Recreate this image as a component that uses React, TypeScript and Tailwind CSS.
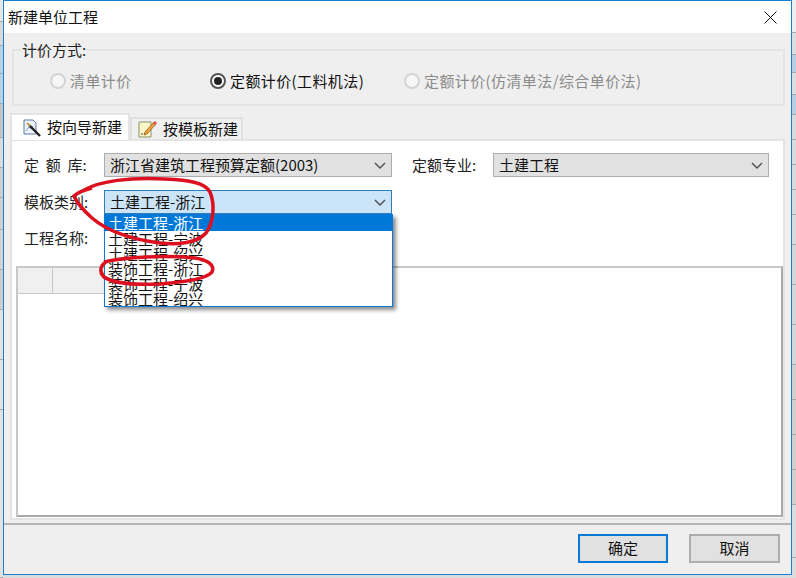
const cjk = "font-['Noto_Sans_CJK_SC','Noto_Sans',sans-serif]";

const leftRows = [
  { h: 22, bg: 'bg-[#e6e6e6]' },
  { h: 24, bg: 'bg-[#d9d9d9]' },
  { h: 28, bg: 'bg-[#b9cfe2]' },
  { h: 30, bg: 'bg-[#b9cfe2]' },
  { h: 34, bg: 'bg-[#c4c4c4]' },
  { h: 30, bg: 'bg-[#dcdcdc]' },
  { h: 30, bg: 'bg-[#cfcfcf]' },
  { h: 32, bg: 'bg-[#cfcfcf]' },
  { h: 40, bg: 'bg-[#d4d4d4]' },
  { h: 40, bg: 'bg-[#cdcdcd]' },
  { h: 50, bg: 'bg-[#e2e2e2]' },
  { h: 50, bg: 'bg-[#e2e2e2]' },
  { h: 168, bg: 'bg-[#e2e2e2]' },
];

const rightRows = [
  { h: 33, bg: 'bg-[#eeeeee]' },
  { h: 22, bg: 'bg-[#dddddd]' },
  { h: 18, bg: 'bg-[#b8cde0]' },
  { h: 22, bg: 'bg-[#dddddd]' },
  { h: 20, bg: 'bg-[#b8cde0]' },
  { h: 25, bg: 'bg-[#dadada]' },
  { h: 25, bg: 'bg-[#dadada]' },
  { h: 25, bg: 'bg-[#dadada]' },
  { h: 25, bg: 'bg-[#dadada]' },
  { h: 30, bg: 'bg-[#dadada]' },
  { h: 40, bg: 'bg-[#d6d6d6]' },
  { h: 40, bg: 'bg-[#d6d6d6]' },
  { h: 40, bg: 'bg-[#d6d6d6]' },
  { h: 35, bg: 'bg-[#d2cfcc]' },
  { h: 35, bg: 'bg-[#d2cfcc]' },
  { h: 35, bg: 'bg-[#d2cfcc]' },
  { h: 35, bg: 'bg-[#d2cfcc]' },
  { h: 53, bg: 'bg-[#dcdcdc]' },
];

const options = ['土建工程-浙江', '土建工程-宁波', '土建工程-绍兴', '装饰工程-浙江', '装饰工程-宁波', '装饰工程-绍兴'];

function Strip({ rows, width }: { rows: { h: number; bg: string }[]; width: string }) {
  return (
    <div className={`${width} shrink-0 flex flex-col`}>
      {rows.map((r, i) => (
        <div key={i} className={`${r.bg} border-b border-[#a9a9a9] shrink-0`} style={{ height: r.h }} />
      ))}
    </div>
  );
}

function Chevron() {
  return (
    <svg width="12" height="7" viewBox="0 0 12 7" className="shrink-0">
      <polyline points="1,1 6,6 11,1" fill="none" stroke="#4d4d4d" strokeWidth="1.4" />
    </svg>
  );
}

function Radio({ label, checked, disabled }: { label: string; checked?: boolean; disabled?: boolean }) {
  return (
    <div className={`flex items-center gap-[4px] text-[15px] leading-[20px] tracking-[0.4px] ${disabled ? 'text-[#8b8b8b]' : 'text-[#111]'}`}>
      <span className={`w-[16px] h-[16px] rounded-full border-2 flex items-center justify-center ${disabled ? 'border-[#d4d4d4] bg-[#f6f6f6]' : 'border-[#555] bg-white'}`}>
        {checked && <span className="w-[8px] h-[8px] rounded-full bg-[#222]" />}
      </span>
      <span>{label}</span>
    </div>
  );
}

function Combo({ value, width, active }: { value: string; width: string; active?: boolean }) {
  return (
    <div className={`${width} h-[24px] flex items-center justify-between pl-[5px] pr-[5px] border-[1.5px] text-[15px] text-[#111] ${active ? 'bg-[#cce4f7] border-[#2f7fbd]' : 'bg-[#e1e1e1] border-[#adadad]'}`}>
      <span className="whitespace-nowrap">{value}</span>
      <Chevron />
    </div>
  );
}

function WizardIcon() {
  return (
    <svg width="20" height="20" viewBox="0 0 20 20">
      <path d="M2 2h9l3 3v11H2z" fill="#eef3fa" stroke="#5b78a8" strokeWidth="1" />
      <path d="M4 13l3-4 2 2 2-3" fill="none" stroke="#7d9ccc" strokeWidth="1" />
      <path d="M7 7l11 11" stroke="#222" strokeWidth="2.4" />
      <path d="M5 5l3 3" stroke="#c9a04a" strokeWidth="2" />
    </svg>
  );
}

function TemplateIcon() {
  return (
    <svg width="20" height="20" viewBox="0 0 20 20">
      <path d="M2 3h12v15H2z" fill="#fbf6c8" stroke="#8a8f6a" strokeWidth="1" />
      <path d="M4 15h2M7 15h2" stroke="#555" strokeWidth="1" />
      <path d="M8 13l9-10 2 2-9 10-3 1z" fill="#e8a33c" stroke="#9a5b1e" strokeWidth="0.8" />
      <path d="M16 4l2-2 2 2-2 2z" fill="#e2574c" />
    </svg>
  );
}

export default function App() {
  return (
    <div className={`${cjk} relative w-[796px] h-[578px] overflow-hidden flex bg-[#dcdcdc]`}>
      <Strip rows={leftRows} width="w-[3px]" />

      <div className="w-[789px] shrink-0 h-[575px] flex flex-col border border-[#1a7fd0] bg-[#efefef]">
        {/* title bar */}
        <div className="h-[32px] shrink-0 bg-white flex items-center justify-between pl-[4px] pr-[14px]">
          <span className="text-[15px] text-[#111]">新建单位工程</span>
          <svg width="13" height="13" viewBox="0 0 13 13">
            <path d="M0.5 0.5l12 12M12.5 0.5l-12 12" stroke="#111" strokeWidth="1" />
          </svg>
        </div>

        <div className="flex-1 flex flex-col min-h-0">
          <fieldset className="ml-[8px] mr-[6px] mt-[8px] h-[65px] shrink-0 border-2 border-[#e4e4e4] pl-[7px]">
            <legend className="px-[1px] text-[15px] leading-[18px] text-[#222]">计价方式:</legend>
            <div className="flex items-center pl-[29px] pt-[12px]">
              <div className="w-[160px]"><Radio label="清单计价" disabled /></div>
              <div className="w-[194px]"><Radio label="定额计价(工料机法)" checked /></div>
              <Radio label="定额计价(仿清单法/综合单价法)" disabled />
            </div>
          </fieldset>

          {/* tabs */}
          <div className="ml-[6px] mt-[6px] h-[27px] shrink-0 flex items-end">
            <div className="w-[120px] h-[27px] -mb-[1px] bg-white border-2 border-b-0 border-[#e4e4e4] flex items-center gap-[5px] pl-[10px] text-[15px] text-[#111] relative z-10">
              <WizardIcon />
              <span>按向导新建</span>
            </div>
            <div className="w-[113px] h-[22px] bg-[#f0f0f0] border-2 border-b-0 border-[#e0e0e0] flex items-center gap-[6px] pl-[5px] text-[15px] text-[#111]">
              <TemplateIcon />
              <span>按模板新建</span>
            </div>
          </div>

          {/* tab page */}
          <div className="ml-[6px] mr-[6px] h-[381px] shrink-0 bg-white border-2 border-[#e4e4e4] flex flex-col pt-[12px]">
            <div className="flex items-center pl-[12px]">
              <span className="w-[80px] text-[15px] text-[#222] whitespace-pre">定  额  库:</span>
              <Combo value="浙江省建筑工程预算定额(2003)" width="w-[288px]" />
              <span className="ml-[20px] w-[81px] text-[15px] text-[#222]">定额专业:</span>
              <Combo value="土建工程" width="w-[276px]" />
            </div>
            <div className="flex items-center pl-[12px] mt-[13px]">
              <span className="w-[80px] text-[15px] text-[#222]">模板类别:</span>
              <Combo value="土建工程-浙江" width="w-[288px]" active />
            </div>
            <div className="flex items-center pl-[12px] mt-[13px] h-[22px]">
              <span className="w-[80px] text-[15px] text-[#222]">工程名称:</span>
            </div>

            {/* table */}
            <div className="ml-[4px] mt-[17px] flex-1 min-h-0 mb-[1px] border-2 border-[#c8c8c8] border-r-[#a9a9a9] border-b-[#a9a9a9] bg-white">
              <div className="h-[26px] flex w-[88px] border-b border-[#c8c8c8] bg-[#f0f0f0]">
                <div className="w-[35px] border-r border-[#c8c8c8]" />
                <div className="flex-1" />
              </div>
            </div>
          </div>

          {/* footer */}
          <div className="mt-[3px] border-t-2 border-[#b4b4b4] flex-1 flex justify-end gap-[21px] pt-[9px] pr-[11px]">
            <button className="w-[90px] h-[29px] bg-[#e1e1e1] border-2 border-[#0a78d7] text-[15px] text-[#111]">确定</button>
            <button className="w-[91px] h-[29px] bg-[#e1e1e1] border-2 border-[#adadad] text-[15px] text-[#111]">取消</button>
          </div>
        </div>
      </div>

      <Strip rows={rightRows} width="w-[4px]" />

      {/* open dropdown list */}
      <div className="absolute left-[104px] top-[214px] w-[289px] h-[93px] bg-white border border-[#0a78d7] shadow-[3px_3px_4px_rgba(0,0,0,0.45)] overflow-hidden flex flex-col">
        {options.map((o, i) => (
          <div key={o} className={`shrink-0 pl-[3px] text-[15px] whitespace-nowrap ${i === 0 ? 'h-[16px] leading-[16px] bg-[#0078d7] text-white' : 'h-[15px] leading-[15px] text-[#111]'}`}>
            {o}
          </div>
        ))}
      </div>

      {/* hand-drawn red marks */}
      <svg className="absolute inset-0 pointer-events-none" width="796" height="578" viewBox="0 0 796 578">
        <path d="M84 190C100 181 130 177 165 179C190 180 205 183 210 192C215 204 214 222 206 233C197 243 178 245 160 243C135 240 108 232 92 218C82 209 76 201 74 196C78 192 84 190 92 188" fill="none" stroke="#dc101e" strokeWidth="3.5" />
        <path d="M104 262C125 257 165 255 195 258C208 260 215 265 212 272C207 279 185 282 160 284C135 285 112 283 104 277C99 272 100 266 106 262" fill="none" stroke="#dc101e" strokeWidth="3.5" />
      </svg>
    </div>
  );
}
